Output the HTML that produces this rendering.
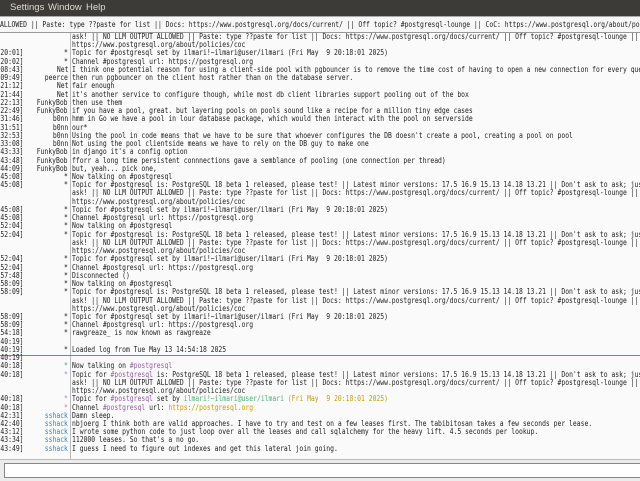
<!DOCTYPE html>
<html><head><meta charset="utf-8"><style>
*{margin:0;padding:0}
body{width:640px;height:480px;overflow:hidden;background:#ececec;position:relative;font-family:"DejaVu Sans Mono","Liberation Mono",monospace;font-size:8px;color:#222}
#menu{position:absolute;left:0;top:0;width:640px;height:16px;background:#3c3b37;color:#dfdbd2;font:9.5px "Liberation Sans",sans-serif}
#menu span{position:absolute;top:2px}
#topic{position:absolute;left:0;top:16px;width:640px;height:15px;background:#f7f7f7;border-top:1px solid #aaa;border-bottom:1px solid #aaa;line-height:15px;overflow:hidden}
#topic div{white-space:pre;transform:scaleX(.8);transform-origin:0 0;position:absolute;left:0;top:0}
#chat{position:absolute;left:0;top:32px;width:640px;height:426px;background:#fafafa;border-top:1px solid #999;overflow:hidden}
#sep{position:absolute;left:70px;top:0;width:1px;height:426px;background:#bbb}
#rows{position:absolute;left:0;top:0;width:640px}
.r{position:relative;height:8.24px;line-height:8.24px;white-space:pre}
.r b{font-weight:normal;position:absolute;left:-15.4px;top:0;transform:scaleX(.8);transform-origin:0 0}
.r i{font-style:normal;position:absolute;right:572px;top:0;text-align:right;transform:scaleX(.8);transform-origin:100% 0}
.r span{position:absolute;left:72px;top:0;transform:scaleX(.8);transform-origin:0 0}
.div{position:absolute;left:0;top:322px;width:640px;height:1px;background:#c07040}
#inwrap{position:absolute;left:0;top:459px;width:640px;height:21px;background:#ececec;border-top:1px solid #bbb}
#input{position:absolute;left:4px;top:3px;width:640px;height:13px;background:#fff;border:1px solid #888}
em{font-style:normal}
.p{color:#8f5f9f}.g{color:#4caf7d}.y{color:#c4a000}.gs{color:#4caf50}.ps{color:#c080b0}.bl{color:#3a7fc0}
</style></head><body>
<div id="menu"><span style="left:-3px">r</span><span style="left:10px">Settings</span><span style="left:48px">Window</span><span style="left:86px">Help</span></div>
<div id="topic"><div>ALLOWED || Paste: type ??paste for list || Docs: https://www.postgresql.org/docs/current/ || Off topic? #postgresql-lounge || CoC: https://www.postgresql.org/about/policies/coc</div></div>
<div id="chat">
<div id="sep"></div>
<div class="div"></div>
<div id="rows">
<div class="r"><span>ask! || NO LLM OUTPUT ALLOWED || Paste: type ??paste for list || Docs: https://www.postgresql.org/docs/current/ || Off topic? #postgresql-lounge || CoC:</span></div>
<div class="r"><span>https://www.postgresql.org/about/policies/coc</span></div>
<div class="r"><b>[13:20:01]</b><i>*</i><span>Topic for #postgresql set by ilmari!~ilmari@user/ilmari (Fri May  9 20:18:01 2025)</span></div>
<div class="r"><b>[13:20:02]</b><i>*</i><span>Channel #postgresql url: https://postgresql.org</span></div>
<div class="r"><b>[14:08:43]</b><i>Net</i><span>I think one potential reason for using a client-side pool with pgbouncer is to remove the time cost of having to open a new connection for every query</span></div>
<div class="r"><b>[14:09:49]</b><i>peerce</i><span>then run pgbouncer on the client host rather than on the database server.</span></div>
<div class="r"><b>[14:21:12]</b><i>Net</i><span>fair enough</span></div>
<div class="r"><b>[14:21:44]</b><i>Net</i><span>it's another service to configure though, while most db client libraries support pooling out of the box</span></div>
<div class="r"><b>[14:22:13]</b><i>FunkyBob</i><span>then use them</span></div>
<div class="r"><b>[14:22:49]</b><i>FunkyBob</i><span>if you have a pool, great. but layering pools on pools sound like a recipe for a million tiny edge cases</span></div>
<div class="r"><b>[14:31:46]</b><i>b0nn</i><span>hmm in Go we have a pool in lour database package, which would then interact with the pool on serverside</span></div>
<div class="r"><b>[14:31:51]</b><i>b0nn</i><span>our*</span></div>
<div class="r"><b>[14:32:53]</b><i>b0nn</i><span>Using the pool in code means that we have to be sure that whoever configures the DB doesn't create a pool, creating a pool on pool</span></div>
<div class="r"><b>[14:33:08]</b><i>b0nn</i><span>Not using the pool clientside means we have to rely on the DB guy to make one</span></div>
<div class="r"><b>[14:43:33]</b><i>FunkyBob</i><span>in django it's a config option</span></div>
<div class="r"><b>[14:43:48]</b><i>FunkyBob</i><span>fforr a long time persistent connnections gave a semblance of pooling (one connection per thread)</span></div>
<div class="r"><b>[14:44:09]</b><i>FunkyBob</i><span>but, yeah... pick one,</span></div>
<div class="r"><b>[14:45:08]</b><i>*</i><span>Now talking on #postgresql</span></div>
<div class="r"><b>[14:45:08]</b><i>*</i><span>Topic for #postgresql is: PostgreSQL 18 beta 1 released, please test! || Latest minor versions: 17.5 16.9 15.13 14.18 13.21 || Don't ask to ask; just ask!</span></div>
<div class="r"><span>ask! || NO LLM OUTPUT ALLOWED || Paste: type ??paste for list || Docs: https://www.postgresql.org/docs/current/ || Off topic? #postgresql-lounge || CoC:</span></div>
<div class="r"><span>https://www.postgresql.org/about/policies/coc</span></div>
<div class="r"><b>[14:45:08]</b><i>*</i><span>Topic for #postgresql set by ilmari!~ilmari@user/ilmari (Fri May  9 20:18:01 2025)</span></div>
<div class="r"><b>[14:45:08]</b><i>*</i><span>Channel #postgresql url: https://postgresql.org</span></div>
<div class="r"><b>[14:52:04]</b><i>*</i><span>Now talking on #postgresql</span></div>
<div class="r"><b>[14:52:04]</b><i>*</i><span>Topic for #postgresql is: PostgreSQL 18 beta 1 released, please test! || Latest minor versions: 17.5 16.9 15.13 14.18 13.21 || Don't ask to ask; just ask!</span></div>
<div class="r"><span>ask! || NO LLM OUTPUT ALLOWED || Paste: type ??paste for list || Docs: https://www.postgresql.org/docs/current/ || Off topic? #postgresql-lounge || CoC:</span></div>
<div class="r"><span>https://www.postgresql.org/about/policies/coc</span></div>
<div class="r"><b>[14:52:04]</b><i>*</i><span>Topic for #postgresql set by ilmari!~ilmari@user/ilmari (Fri May  9 20:18:01 2025)</span></div>
<div class="r"><b>[14:52:04]</b><i>*</i><span>Channel #postgresql url: https://postgresql.org</span></div>
<div class="r"><b>[14:57:48]</b><i>*</i><span>Disconnected ()</span></div>
<div class="r"><b>[14:58:09]</b><i>*</i><span>Now talking on #postgresql</span></div>
<div class="r"><b>[14:58:09]</b><i>*</i><span>Topic for #postgresql is: PostgreSQL 18 beta 1 released, please test! || Latest minor versions: 17.5 16.9 15.13 14.18 13.21 || Don't ask to ask; just ask!</span></div>
<div class="r"><span>ask! || NO LLM OUTPUT ALLOWED || Paste: type ??paste for list || Docs: https://www.postgresql.org/docs/current/ || Off topic? #postgresql-lounge || CoC:</span></div>
<div class="r"><span>https://www.postgresql.org/about/policies/coc</span></div>
<div class="r"><b>[14:58:09]</b><i>*</i><span>Topic for #postgresql set by ilmari!~ilmari@user/ilmari (Fri May  9 20:18:01 2025)</span></div>
<div class="r"><b>[14:58:09]</b><i>*</i><span>Channel #postgresql url: https://postgresql.org</span></div>
<div class="r"><b>[15:54:18]</b><i>*</i><span>rawgreaze_ is now known as rawgreaze</span></div>
<div class="r"><b>[10:40:19]</b></div>
<div class="r"><b>[10:40:19]</b><i>*</i><span>Loaded log from Tue May 13 14:54:18 2025</span></div>
<div class="r"><b>[10:40:19]</b></div>
<div class="r"><b>[10:40:18]</b><i class="gs">*</i><span>Now talking on <em class="p">#postgresql</em></span></div>
<div class="r"><b>[10:40:18]</b><i class="ps">*</i><span>Topic for <em class="p">#postgresql</em> is: PostgreSQL 18 beta 1 released, please test! || Latest minor versions: 17.5 16.9 15.13 14.18 13.21 || Don't ask to ask; just ask!</span></div>
<div class="r"><span>ask! || NO LLM OUTPUT ALLOWED || Paste: type ??paste for list || Docs: https://www.postgresql.org/docs/current/ || Off topic? #postgresql-lounge || CoC:</span></div>
<div class="r"><span>https://www.postgresql.org/about/policies/coc</span></div>
<div class="r"><b>[10:40:18]</b><i class="ps">*</i><span>Topic for <em class="p">#postgresql</em> set by <em class="g">ilmari!~ilmari@user/ilmari</em> <em class="y">(Fri May  9 20:18:01 2025)</em></span></div>
<div class="r"><b>[10:40:18]</b><i class="ps">*</i><span>Channel <em class="p">#postgresql</em> url: <em class="y">https://postgresql.org</em></span></div>
<div class="r"><b>[10:42:31]</b><i class="bl">sshack</i><span>Damn sleep.</span></div>
<div class="r"><b>[10:42:40]</b><i class="bl">sshack</i><span>nbjoerg I think both are valid approaches. I have to try and test on a few leases first. The tabibitosan takes a few seconds per lease.</span></div>
<div class="r"><b>[10:43:12]</b><i class="bl">sshack</i><span>I wrote some python code to just loop over all the leases and call sqlalchemy for the heavy lift. 4.5 seconds per lookup.</span></div>
<div class="r"><b>[10:43:34]</b><i class="bl">sshack</i><span>112000 leases. So that's a no go.</span></div>
<div class="r"><b>[10:43:49]</b><i class="bl">sshack</i><span>I guess I need to figure out indexes and get this lateral join going.</span></div>
</div>
</div>
<div id="inwrap"><div id="input"></div></div>
</body></html>
